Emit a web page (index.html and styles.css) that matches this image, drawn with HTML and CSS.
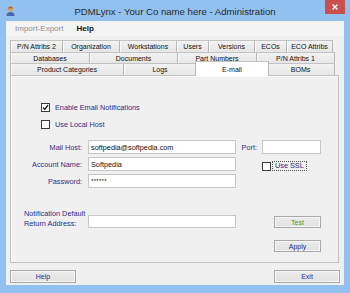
FILE: index.html
```html
<!DOCTYPE html>
<html lang="en">
<head>
    <meta charset="UTF-8">
    <title>PDMLynx - Administration</title>
    <link rel="stylesheet" href="styles.css">
</head>
<body>
    <div class="window">
        <div class="titlebar">
            <svg class="app-icon" width="9" height="10" viewBox="0 0 9 10">
                <path d="M0.5 10 C0.5 7 2 6 4.5 6 C7 6 8.5 7 8.5 10 Z" fill="#4c67a6"/>
                <circle cx="4.5" cy="3.2" r="2.4" fill="#e39a55"/>
                <path d="M2.1 3 C2.1 1 3.3 0.6 4.5 0.6 C5.8 0.6 6.9 1.2 6.9 3 C6 2 3 2 2.1 3 Z" fill="#b8652a"/>
            </svg>
            <div class="title">PDMLynx - Your Co name here - Administration</div>
            <div class="close">
                <svg width="6" height="6" viewBox="0 0 6 6">
                    <path d="M0.5 0.5 L5.5 5.5 M5.5 0.5 L0.5 5.5" stroke="#fff" stroke-width="1.4"/>
                </svg>
            </div>
        </div>

        <div class="client">
            <div class="menubar">
                <span class="menu disabled">Import-Export</span>
                <span class="menu strong">Help</span>
            </div>

            <div class="tabs">
                <div class="tabrow row1">
                    <div class="tab">P/N Attribs 2</div>
                    <div class="tab">Organization</div>
                    <div class="tab">Workstations</div>
                    <div class="tab">Users</div>
                    <div class="tab">Versions</div>
                    <div class="tab">ECOs</div>
                    <div class="tab">ECO Attribs</div>
                </div>
                <div class="tabrow row2">
                    <div class="tab">Databases</div>
                    <div class="tab">Documents</div>
                    <div class="tab">Part Numbers</div>
                    <div class="tab">P/N Attribs 1</div>
                </div>
                <div class="tabrow row3">
                    <div class="tab">Product Categories</div>
                    <div class="tab">Logs</div>
                    <div class="tab selected">E-mail</div>
                    <div class="tab">BOMs</div>
                </div>
            </div>

            <div class="panel">
                <div class="checks">
                    <label class="check-row">
                        <span class="cb">
                            <svg width="7" height="7" viewBox="0 0 7 7">
                                <path d="M1 3.5 L2.8 5.5 L6 1" fill="none" stroke="#222" stroke-width="1.3"/>
                            </svg>
                        </span>
                        <span class="lbl">Enable Email Notifications</span>
                    </label>
                    <label class="check-row">
                        <span class="cb"></span>
                        <span class="lbl">Use Local Host</span>
                    </label>
                </div>

                <div class="form">
                    <div class="field-label">Mail Host:</div>
                    <div class="input">softpedia@softpedia.com</div>
                    <div class="field-label port">Port:</div>
                    <div class="input"></div>

                    <div class="field-label">Account Name:</div>
                    <div class="input">Softpedia</div>
                    <div></div>
                    <div class="ssl">
                        <span class="cb"></span>
                        <span class="lbl focus">Use SSL</span>
                    </div>

                    <div class="field-label">Password:</div>
                    <div class="input pw">******</div>
                    <div></div>
                    <div></div>

                    <div class="notify-label">Notification Default<br>Return Address:</div>
                    <div class="input low"></div>
                    <div></div>
                    <div class="btn-cell low"><button class="btn test">Test</button></div>

                    <div></div>
                    <div></div>
                    <div></div>
                    <div class="btn-cell low"><button class="btn">Apply</button></div>
                </div>
            </div>

            <div class="footer">
                <button class="btn wide">Help</button>
                <button class="btn wide">Exit</button>
            </div>
        </div>
    </div>
</body>
</html>
```

FILE: styles.css
```css
* {
    box-sizing: border-box;
}
body {
    margin: 0;
    font-family: "Liberation Sans", Arial, sans-serif;
    background: #92c1ef;
}
.window {
    width: 350px;
    height: 293px;
    background: #92c1ef;
    display: flex;
    flex-direction: column;
}

/* title bar */
.titlebar {
    height: 21px;
    display: grid;
    grid-template-columns: 1fr auto 1fr;
    align-items: center;
}
.app-icon {
    margin-left: 6px;
    margin-top: 1px;
}
.title {
    font-size: 9.6px;
    color: #2a2a2a;
    white-space: nowrap;
    padding-top: 1px;
}
.close {
    justify-self: end;
    align-self: start;
    width: 20px;
    height: 14px;
    margin-right: 5px;
    background: #c9504f;
    display: flex;
    align-items: center;
    justify-content: center;
}

/* client area */
.client {
    height: 264px;
    margin: 0 6px;
    background: #f0f0f0;
    padding: 0 4px;
    display: flex;
    flex-direction: column;
}
.menubar {
    height: 15px;
    margin: 0 -4px;
    padding-left: 9px;
    display: flex;
    align-items: center;
    gap: 13px;
    font-size: 8px;
    background: #f4f4f4;
}
.menu.disabled {
    color: #8d8d8d;
}
.menu.strong {
    font-weight: bold;
    color: #111;
}

/* tabs */
.tabs {
    margin-top: 4px;
    font-size: 7px;
    color: #111;
}
.tabrow {
    display: grid;
}
.row1 {
    height: 12px;
    grid-template-columns: 53px 57px 57px 32px 46px 32px 46px;
}
.row2 {
    height: 11px;
    grid-template-columns: 80px 88px 79px 78px;
}
.row3 {
    height: 12px;
    grid-template-columns: 114px 73px 70px 68px;
}
.tab {
    display: flex;
    align-items: center;
    justify-content: center;
    white-space: nowrap;
    background: linear-gradient(#f2f2f2, #e6e6e6);
    border-top: 1px solid #c3c3c3;
    border-right: 1px solid #b8b8b8;
    box-shadow: inset 1px 0 #fbfbfb;
}
.tab:first-child {
    border-left: 1px solid #b8b8b8;
}
.tab.selected {
    position: relative;
    z-index: 1;
    margin: -2px -2px -1px -2px;
    background: #fff;
    border-left: 1px solid #b8b8b8;
    box-shadow: none;
}

/* panel */
.panel {
    height: 188px;
    margin-right: 1px;
    border: 1px solid #c0c0c0;
    box-shadow: inset 1px 1px #fbfbfb;
    padding: 25px 0 0 30px;
    font-size: 7.3px;
    color: #2c2c88;
}
.checks {
    display: flex;
    flex-direction: column;
    gap: 5px;
}
.check-row {
    height: 12px;
    display: flex;
    align-items: center;
    gap: 5px;
}
.cb {
    width: 9px;
    height: 9px;
    border: 1px solid #3a3a3a;
    background: #fff;
    display: flex;
    align-items: center;
    justify-content: center;
}

/* form grid */
.form {
    margin: 10px 0 0 -17px;
    display: grid;
    grid-template-columns: 64px 148px 26px 59px;
    grid-template-rows: 14px 14px 14px 37px 21px;
    row-gap: 3px;
}
.field-label {
    padding-right: 6px;
    display: flex;
    align-items: center;
    justify-content: flex-end;
    white-space: nowrap;
}
.field-label.port {
    padding-right: 5px;
}
.input {
    height: 14px;
    background: #fff;
    border: 1px solid #c6c6c6;
    padding-left: 2px;
    display: flex;
    align-items: center;
    color: #111;
    font-size: 7.3px;
}
.input.pw {
    font-size: 6px;
    letter-spacing: 0.3px;
}
.notify-label {
    align-self: end;
    line-height: 9.5px;
    white-space: nowrap;
}
.input.low {
    align-self: end;
    height: 13px;
}
.btn-cell {
    padding-left: 12px;
}
.btn-cell.low {
    align-self: end;
    height: 12px;
}
.ssl {
    display: flex;
    align-items: center;
    gap: 1px;
    padding-top: 4px;
}
.ssl .lbl.focus {
    border: 1px dotted #555;
    padding: 0 2px;
    line-height: 8px;
}

/* buttons */
.btn {
    font-family: "Liberation Sans", Arial, sans-serif;
    font-size: 7px;
    color: #2c2c88;
    background: linear-gradient(#ececec, #e1e1e1);
    border: 1px solid #a9a9a9;
    box-shadow: inset 0 0 0 1px #f6f6f6;
    padding: 0;
    width: 47px;
    height: 12px;
}
.btn.test {
    color: #3c9a3c;
}
.footer {
    margin-top: 7px;
    display: flex;
    justify-content: space-between;
}
.btn.wide {
    width: 66px;
    height: 13px;
}
```
